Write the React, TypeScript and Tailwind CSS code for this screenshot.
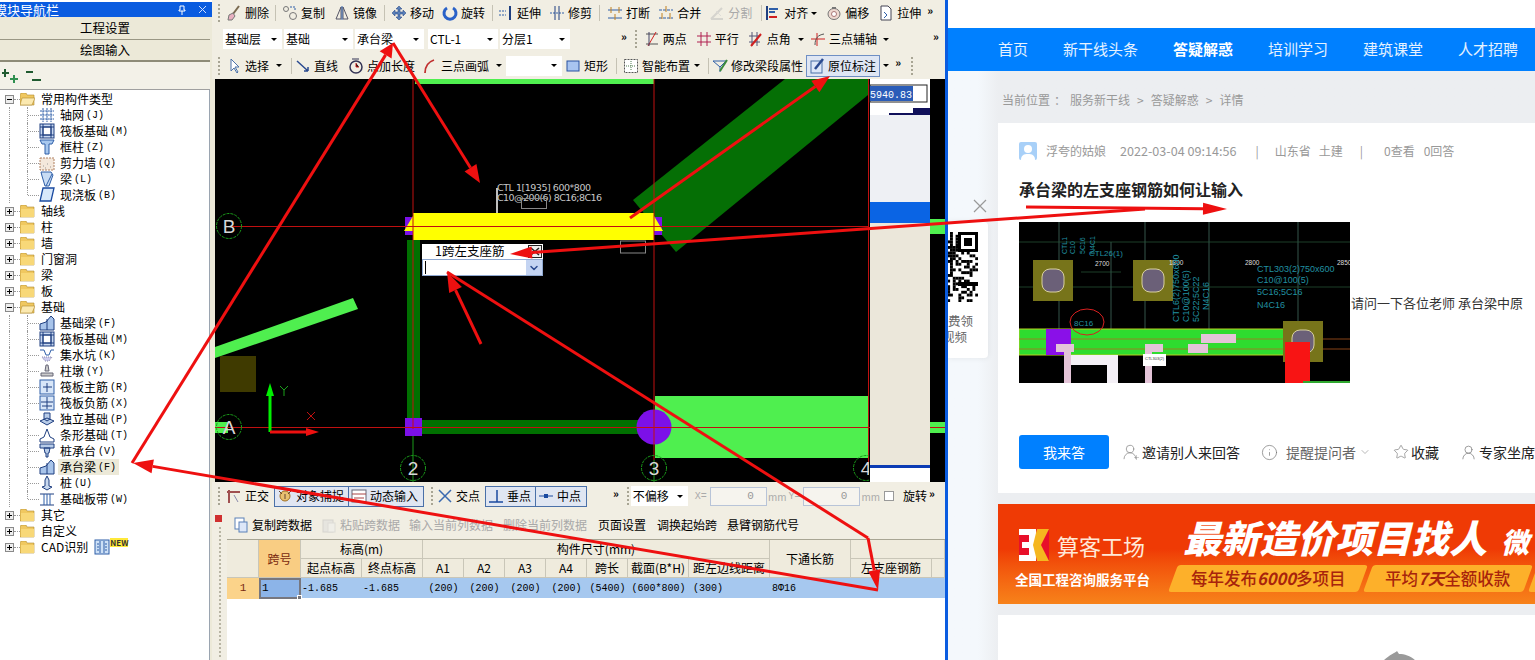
import React from "react";
import { ChevronDown, Info, Star, UserRound, Plus } from "lucide-react";

const MONO = "[font-family:'Liberation_Mono','Noto_Sans_CJK_SC',monospace]";

function Ic({ n, dim }: { n: string; dim?: boolean }) {
  const b = "#2f5fa8", d = "#1f3f80", r = "#d02020";
  const p: Record<string, React.ReactNode> = {
    del: <><path d="M13 1 7 9" stroke="#7a6a50" strokeWidth="2"/><path d="M3 10l4-2 2 3-3 4H2z" fill="#e8b0c0" stroke="#777"/></>,
    copy: <><circle cx="4" cy="4" r="2.5" fill="none" stroke="#777"/><circle cx="11" cy="11" r="3.5" fill="none" stroke="#777"/><path d="M8 2h5v4" stroke={b} fill="none" strokeDasharray="2 1"/></>,
    mirror: <><path d="M7 2 2 14h5zM9 2l5 12H9z" fill="none" stroke="#556"/><path d="M8 1v14" stroke={b}/></>,
    move: <path d="M8 1 5 4h2v3H4V5L1 8l3 3V9h3v3H5l3 3 3-3H9V9h3v2l3-3-3-3v2H9V4h2z" fill="#5a80b8" stroke={d} strokeWidth=".5"/>,
    rot: <path d="M11 3a6 6 0 1 1-6 0" fill="none" stroke="#2a62c8" strokeWidth="3"/>,
    ext: <><path d="M1 6h7M1 10h7" stroke={b} strokeDasharray="2 1"/><path d="M12 1v14" stroke={d} strokeWidth="2"/></>,
    trim: <><path d="M1 8h14" stroke={b} strokeDasharray="2 1"/><path d="M6 1v14M10 1v14" stroke={d}/></>,
    brk: <><path d="M1 5h14M1 13h14" stroke={b}/><path d="M4 2v6M12 2v6M8 9v6" stroke="#c08020"/></>,
    merge: <><path d="M1 5h14M1 13h14" stroke={b} strokeDasharray="3 1"/><path d="M8 1v6M4 8v6M12 8v6" stroke="#c08020"/></>,
    split: <><path d="M2 14 13 3M2 14h12" stroke="#bbb" strokeWidth="2"/><path d="M7 6l5 5" stroke="#ccc"/></>,
    align: <><path d="M2 1v14" stroke={d} strokeWidth="2"/><path d="M4 4h9M4 7h6" stroke={b} strokeWidth="2"/><path d="M4 12h8" stroke={r} strokeWidth="2"/></>,
    off: <><ellipse cx="8" cy="9" rx="6" ry="5.5" fill="#eed8d0" stroke="#777"/><circle cx="8" cy="9" r="2.5" fill="#fff" stroke="#a77"/><path d="M6 3h4" stroke="#777" strokeWidth="2"/></>,
    str: <><path d="M3 1h7l3 3v11H3z" fill="#fff" stroke="#445"/><path d="M6 7l3 3-3 3" fill="none" stroke={b}/></>,
    two: <><path d="M2 3h12M2 13h12" stroke="#555"/><path d="M4 15 12 1" stroke={r}/><path d="M5 1v14" stroke="#446"/></>,
    para: <path d="M1 5h14M1 11h14M5 1v14M11 1v14" stroke="#b02050"/>,
    ang: <><path d="M1 5h11M1 11h11M4 1v14M9 1v14" stroke="#557"/><path d="M3 15 13 3" stroke={r} strokeWidth="2"/></>,
    three: <><path d="M1 8h14M7 2v13" stroke={r}/><path d="M5 14c0-7 3-10 9-11" stroke="#555" fill="none"/></>,
    sel: <path d="M5 1v12l3-3 3 5 1-1-3-5h4z" fill="#fff" stroke="#4a70a8"/>,
    line: <path d="M2 3l11 10M13 13h-4M13 13V9" stroke="#2a4a90" strokeWidth="1.5" fill="none"/>,
    pt: <><circle cx="8" cy="9" r="6" fill="none" stroke="#335" strokeWidth="1.5"/><path d="M8 5v4h3" stroke={r}/><path d="M4 1h7" stroke="#335"/></>,
    arc: <path d="M3 15C3 8 6 4 12 2" fill="none" stroke="#c03030" strokeWidth="1.8"/>,
    rect: <rect x="2" y="3" width="12" height="10" fill="#a8c4f0" stroke="#2850a0"/>,
    smart: <><rect x="1.5" y="1.5" width="13" height="13" fill="#fff" stroke="#555" strokeDasharray="2 1"/><path d="M8 3v10M3 8h10" stroke="#4a7a4a" strokeDasharray="1 1"/></>,
    attr: <><path d="M1 3h13l-6 6z" fill="none" stroke={b}/><path d="M8 9v5" stroke={b}/><path d="M15 2 8 13" stroke="#3a8a3a" strokeWidth="2"/></>,
    mark: <><rect x="2" y="3" width="11" height="12" fill="#dde7f8" stroke="#4a70a8"/><path d="M14 1 6 11" stroke="#2a4a90" strokeWidth="2.5"/></>,
    ortho: <><path d="M3 2v13M1 4h13" stroke="#a05050" strokeWidth="2"/><path d="M8 7l4 7" stroke="#88a"/></>,
    snap: <><circle cx="8" cy="8" r="5" fill="#e8c070" stroke="#a07020"/><path d="M2 3l3 3M14 3l-3 3M8 6v5" stroke="#643"/></>,
    dyn: <><rect x="1" y="2" width="14" height="12" fill="#fff" stroke="#667"/><path d="M1 6h14M3 10h10" stroke="#a44"/></>,
    cross: <path d="M2 2l12 12M14 2 2 14" stroke="#3a6ab0" strokeWidth="1.5"/>,
    perp: <path d="M1 14h14M9 2v12" stroke="#1a4aa0" strokeWidth="1.5"/>,
    mid: <><path d="M1 8h14" stroke="#1a4aa0"/><rect x="6" y="6" width="4" height="4" fill="#1a4aa0"/></>,
    cp: <><rect x="2" y="1" width="9" height="11" fill="#fff" stroke="#5a80b8"/><rect x="6" y="5" width="8" height="10" fill="#dde7f8" stroke="#5a80b8"/></>,
    paste: <><rect x="2" y="3" width="10" height="12" fill="#ddd" stroke="#bbb"/><rect x="7" y="6" width="7" height="9" fill="#eee" stroke="#ccc"/></>,
    grid: <path d="M1 4h14M1 8h14M1 12h14M4 1v14M8 1v14M12 1v14" stroke={b} strokeDasharray="2 .6"/>,
    raft: <><rect x="1" y="1" width="14" height="14" fill="#c8d8f0" stroke={d}/><rect x="4" y="4" width="8" height="8" fill="#fff" stroke={d}/><path d="M1 4h14M1 12h14M4 1v14M12 1v14" stroke={d}/></>,
    col: <path d="M1 1h14l-2 4H10v10H6V5H3z" fill="#a8c8ee" stroke={b}/>,
    wall: <><rect x="1" y="3" width="14" height="12" fill="#f4e8dc" stroke="#b08060" strokeDasharray="2 1"/><path d="M4 11h1M8 9h1M11 12h1M6 13h1" stroke="#999"/></>,
    beam: <><path d="M2 1h10l2 3-4 11H6L3 5z" fill="#c8dcf4" stroke={b}/><path d="M7 15l6-12" stroke={b}/></>,
    slab: <path d="M4 1h11l-3 13H1z" fill="#d8e8fa" stroke="#1a4aa0" strokeWidth="1.3"/>,
    fb: <><path d="M1 15V9l6-2 5-6 3 3v11z" fill="#a8c4ea" stroke={d}/><path d="M8 4v11" stroke={d}/></>,
    pit: <><path d="M1 3h4l2 5h3l2-5h3" fill="none" stroke={b}/><path d="M3 10h10l-3 4H6z" fill="#cce" stroke="#88a" strokeDasharray="1 1"/></>,
    pier: <><path d="M7 2h2l1 6H6zM2 10h12v3H2z" fill="#ccc" stroke="#667"/></>,
    rp: <><rect x="1" y="1" width="14" height="14" fill="#d8e6f8" stroke={b}/><path d="M8 4v9M4 8h9" stroke={d}/></>,
    rn: <><rect x="1" y="1" width="14" height="14" fill="#d8e6f8" stroke={b}/><path d="M8 2v12M2 7h12M3 11h10" stroke={d}/></>,
    iso: <path d="M1 10l7-3 7 3-7 4zM5 8V2h6v6l-3 2z" fill="#b8cce8" stroke={d}/>,
    strip: <path d="M1 15v-3l4-2 3-8 3 8 4 2v3z" fill="#fff" stroke={d}/>,
    pc: <path d="M1 1h14v4H1zM5 5h6l-1 5H9v4H7v-4H6z" fill="#b8cce8" stroke={d}/>,
    pile: <path d="M8 1l2 4v6l3 1-5 3-5-3 3-1V5z" fill="#c8d8ee" stroke={d}/>,
    band: <><path d="M1 3h14M1 14h14" stroke={d}/><path d="M5 3v11M8 3v11M11 3v11" stroke={b}/></>,
    cad: <><rect x="1" y="1" width="14" height="14" fill="#cde0f6" stroke={b}/><path d="M6 2v12M10 2v12M3 5h2M3 8h2M3 11h2M11 5h2M11 8h2M11 11h2" stroke={b}/></>,
  };
  return (
    <svg width="16" height="16" viewBox="0 0 16 16" className={`shrink-0 ${dim ? "opacity-50" : ""}`}>
      {p[n]}
    </svg>
  );
}

function Caret({ className = "" }: { className?: string }) {
  return <span className={`w-0 h-0 shrink-0 border-x-[3px] border-x-transparent border-t-[3px] border-t-black ${className}`} />;
}
function Sep({ className = "" }: { className?: string }) {
  return <span className={`w-px h-[16px] shrink-0 bg-[#c5c2b4] ${className}`} />;
}
function Handle({ className = "" }: { className?: string }) {
  return <span className={`w-[2px] h-[18px] shrink-0 border-l-2 border-dotted border-[#a8a594] ${className}`} />;
}
function More({ className = "" }: { className?: string }) {
  return <span className={`text-[11px] font-bold leading-none -mt-[6px] shrink-0 ${className}`}>»</span>;
}
function Tool({ i, t, className = "", dim }: { i: string; t: string; className?: string; dim?: boolean }) {
  return (
    <span className={`flex items-center gap-[3px] shrink-0 ${dim ? "text-[#a9a9a9]" : ""} ${className}`}>
      <Ic n={i} dim={dim} />
      <span>{t}</span>
    </span>
  );
}
function Sel({ t, className = "" }: { t: string; className?: string }) {
  return (
    <span className={`h-[20px] bg-white flex items-center justify-between pl-[2px] pr-[5px] shrink-0 ${className}`}>
      <span>{t}</span>
      <Caret />
    </span>
  );
}

function TreeTop({ open, t, extra }: { open?: boolean; t: string; extra?: React.ReactNode }) {
  return (
    <div className="flex items-center h-4">
      <span className="w-[5px] h-4 shrink-0" />
      <span className="w-[9px] h-[9px] shrink-0 border border-[#8a8a8a] bg-[#eeeeee] flex items-center justify-center">
        <span className="relative w-[5px] h-px bg-black block">
          {!open && <span className="absolute left-[2px] -top-[2px] w-px h-[5px] bg-black block" />}
        </span>
      </span>
      <span className="w-[6px] shrink-0 border-t border-dotted border-[#999]" />
      <svg width="15" height="13" viewBox="0 0 15 13" className="shrink-0">
        <path d="M0 2 1 0h5l1 2h7v10H0z" fill="#f0c860" stroke="#b08a30" strokeWidth=".6" />
        {open ? <path d="M2 5h13l-3 7H0z" fill="#fbe9b0" stroke="#b08a30" strokeWidth=".6" /> : <rect x="1" y="4" width="13" height="8" fill="#f8d878" />}
      </svg>
      <span className="ml-[6px] whitespace-nowrap">{t}</span>
      {extra}
    </div>
  );
}
function TreeKid({ i, t, c, sel, last }: { i: string; t: string; c: string; sel?: boolean; last?: boolean }) {
  return (
    <div className="flex items-center h-4">
      <span className="w-[10px] h-4 shrink-0 border-r border-dotted border-[#999]" />
      <span className={`w-[18px] shrink-0 border-r border-dotted border-[#999] ${last ? "h-2 self-start" : "h-4"}`} />
      <span className="w-[11px] shrink-0 border-t border-dotted border-[#999]" />
      <Ic n={i} />
      <span className={`ml-[3px] pl-[2px] pr-[3px] h-4 whitespace-nowrap flex items-center ${sel ? "bg-[#ece9d8]" : ""}`}>
        <span>{t}</span>
        <span className={`${MONO} text-[10px] leading-none ml-[2px] mt-[2px]`}>({c})</span>
      </span>
    </div>
  );
}

const CG = "grid grid-cols-[32px_42px_61px_61px_41px_41px_41px_41px_41px_61px_81px_81px_81px_1fr]";
const H = "border-r border-b border-[#c9c6b8] flex items-center justify-center whitespace-nowrap overflow-hidden";

function Arrow({ x1, y1, x2, y2, head = true, w = 3, hl = 18, hw = 7 }: { x1: number; y1: number; x2: number; y2: number; head?: boolean; w?: number; hl?: number; hw?: number }) {
  const dx = x2 - x1, dy = y2 - y1, L = Math.hypot(dx, dy), ux = dx / L, uy = dy / L;
  const bx = x2 - ux * hl, by = y2 - uy * hl;
  return (
    <g>
      <line x1={x1} y1={y1} x2={head ? bx : x2} y2={head ? by : y2} stroke="#ee1010" strokeWidth={w} />
      {head && <polygon points={`${x2},${y2} ${bx - uy * hw},${by + ux * hw} ${bx + uy * hw},${by - ux * hw}`} fill="#ee1010" />}
    </g>
  );
}

function Bubble({ x, y, t, r = 12.5 }: { x: number; y: number; t: string; r?: number }) {
  return (
    <g>
      <circle cx={x} cy={y} r={r} fill="none" stroke="#1a9a1a" strokeDasharray="3 1" />
      <text x={x} y={y + 7} textAnchor="middle" fontSize="19" fill="#d8d8d8" fontFamily="Liberation Sans">{t}</text>
    </g>
  );
}

function Canvas() {
  return (
    <svg width="730" height="403" viewBox="215 79 730 403" className="block">
      <rect x="215" y="79" width="730" height="403" fill="#000" />
      <rect x="215" y="422" width="13" height="11" fill="#4fef4f" />
      <polygon points="215,347 353,298 358,309 215,358" fill="#4fef4f" />
      <rect x="220" y="356" width="36" height="36" fill="#3f3a00" />
      <rect x="415" y="79" width="239" height="5" fill="#4fef4f" />
      <polygon points="633,200 785,79 868,79 868,95 676,252" fill="#056f05" />
      <rect x="655" y="396" width="213" height="62" fill="#4fef4f" />
      <rect x="407" y="240" width="13" height="180" fill="#007000" />
      <rect x="420" y="420" width="225" height="14" fill="#007000" />
      <rect x="405" y="217" width="8" height="18" fill="#7c10e8" />
      <rect x="654" y="217" width="8" height="18" fill="#7c10e8" />
      <polygon points="404,231 413,216 413,231" fill="#ffff00" />
      <polygon points="654,216 663,231 654,231" fill="#ffff00" />
      <rect x="413" y="213" width="241" height="27" fill="#ffff00" />
      <rect x="405" y="418" width="17" height="18" fill="#7c10e8" />
      <circle cx="654" cy="427" r="17.5" fill="#7c10e8" />
      <path d="M413 79v350M654 79v381M868.5 79v392M230 226.5h638M215 427.5h655" stroke="#c01010" strokeWidth="1" fill="none" />
      <path d="M413 436v46M654 460v22" stroke="#1a9a1a" />
      <rect x="870" y="79" width="60" height="36" fill="#fff" />
      <rect x="870" y="85" width="57" height="17" fill="#fff" stroke="#222" />
      <rect x="870" y="86" width="43" height="15" fill="#2a5cb8" />
      <text x="870" y="97.500" fontSize="10" fill="#fff" fontFamily="Liberation Mono">5940.83</text>
      <rect x="889" y="113" width="41" height="2" fill="#10105a" />
      <rect x="913" y="108" width="17" height="7" fill="#10105a" />
      <rect x="870" y="115" width="60" height="87" fill="#eef0f4" />
      <rect x="870" y="202" width="60" height="21" fill="#0a64e4" />
      <rect x="870" y="223" width="60" height="242" fill="#ebe7da" />
      <rect x="870" y="465" width="60" height="3" fill="#0b3cb4" />
      <rect x="870" y="468" width="60" height="14" fill="#fff" />
      <rect x="930" y="219" width="15" height="15" fill="#4fef4f" />
      <rect x="930" y="422" width="15" height="11" fill="#4fef4f" />
      <line x1="930" y1="427.500" x2="945" y2="427.500" stroke="#c01010" />
      <Bubble x={229} y={226} t="B" />
      <Bubble x={229} y={427} t="A" />
      <Bubble x={413} y={468} t="2" />
      <Bubble x={654} y={468} t="3" />
      <clipPath id="c4"><rect x="215" y="79" width="654" height="403" /></clipPath>
      <g clipPath="url(#c4)"><Bubble x={866} y={468} t="4" /></g>
      <line x1="270" y1="432" x2="270" y2="395" stroke="#00f000" strokeWidth="3" />
      <polygon points="270,383 266,396 274,396" fill="#00f000" />
      <line x1="270" y1="432" x2="306" y2="432" stroke="#ee1010" strokeWidth="3" />
      <polygon points="319,432 306,428 306,436" fill="#ee1010" />
      <path d="M280 386l4 4 4-4M284 390v6" stroke="#1aa01a" fill="none" />
      <path d="M307 412l8 8M315 412l-8 8" stroke="#c01010" fill="none" />
      <line x1="497" y1="188" x2="497" y2="213" stroke="#fff" strokeWidth="1.500" />
      <text x="497" y="191" fontSize="9.500" fill="#c8c8c8" fontFamily="DejaVu Sans" textLength="94">CTL 1[1935] 600*800</text>
      <text x="497" y="201" fontSize="9.500" fill="#c8c8c8" fontFamily="DejaVu Sans" textLength="105">C10@200(6) 8C16;8C16</text>
      <rect x="521.500" y="198.500" width="25" height="10" fill="none" stroke="#888" />
      <rect x="620.500" y="241" width="25" height="12" fill="none" stroke="#888" />
    </svg>
  );
}

function Qr() {
  const cells: React.ReactNode[] = [];
  for (let y = 0; y < 25; y++) {
    for (let x = 0; x < 25; x++) {
      const on = ((x * 7 + y * 13 + (x * y) % 5 + (x ^ y)) % 3 === 0) || (x * 3 + y * 5) % 7 === 1;
      if (on) cells.push(<rect key={`${x}-${y}`} x={x * 2.8} y={y * 2.8} width="2.9" height="2.9" fill="#000" />);
    }
  }
  return (
    <svg width="70" height="70" viewBox="0 0 70 70" className="block shrink-0">
      {cells}
      <rect x="50" y="0" width="20" height="20" fill="#fff" />
      <rect x="51.500" y="1.500" width="17" height="17" fill="none" stroke="#000" strokeWidth="3" />
      <rect x="56" y="6" width="8" height="8" fill="#000" />
      <rect x="50" y="50" width="20" height="4" fill="#000" />
    </svg>
  );
}

function Shot() {
  const pad = (x: number, y: number) => (
    <g>
      <rect x={x} y={y} width="40" height="41" fill="#77741a" />
      <rect x={x + 9} y={y + 9} width="22" height="23" rx="8" fill="#6b6078" stroke="#d8d0a0" />
    </g>
  );
  return (
    <svg width="331" height="161" viewBox="0 0 331 161" className="block shrink-0">
      <rect width="331" height="161" fill="#000" />
      <path d="M40 0v107M126 0v107M190 0v107M279 0v107M92 20v107" stroke="#4a7a6a" strokeWidth=".7" />
      <path d="M0 20h331M0 65h331M62 50h40" stroke="#2a5a3a" strokeWidth=".7" />
      {pad(14, 38)}
      {pad(114, 38)}
      <rect x="0" y="107" width="284" height="26" fill="#2fdc2f" stroke="#b8d020" />
      <path d="M0 117h331M0 127h331" stroke="#c06020" strokeWidth=".7" />
      {pad(264, 99)}
      <rect x="27" y="107" width="25" height="26" fill="#8a10e8" />
      <rect x="266" y="120" width="25" height="41" fill="#f81414" />
      <rect x="284" y="159" width="47" height="2" fill="#2fa82f" />
      <path d="M46 133h53v28H88v-18H48z" fill="#f4f0f6" />
      <rect x="37" y="122" width="18" height="8" fill="#e4c4d8" />
      <rect x="45" y="130" width="7" height="31" fill="#e4c4d8" />
      <rect x="126" y="122" width="18" height="8" fill="#e4c4d8" />
      <rect x="126" y="130" width="7" height="31" fill="#e4c4d8" />
      <rect x="182" y="112" width="35" height="9" fill="#e4c4d8" />
      <rect x="169" y="122" width="20" height="9" fill="#e4c4d8" />
      <rect x="124" y="132" width="23" height="12" fill="#fff" />
      <text x="126" y="138" fontSize="4" fill="#333" fontFamily="Liberation Sans">CTL303(2)</text>
      <ellipse cx="68" cy="100" rx="17" ry="13" fill="none" stroke="#d82020" strokeWidth="1" />
      <text x="55" y="104" fontSize="8" fill="#2090a0" fontFamily="Liberation Sans">8C16</text>
      <text x="76" y="44" fontSize="6.500" fill="#ddd" fontFamily="Liberation Sans">2700</text>
      <text x="150" y="43" fontSize="6.500" fill="#ddd" fontFamily="Liberation Sans">1800</text>
      <text x="226" y="43" fontSize="6.500" fill="#ddd" fontFamily="Liberation Sans">2800</text>
      <text x="318" y="43" fontSize="6.500" fill="#ddd" fontFamily="Liberation Sans">2850</text>
      <text x="70" y="34" fontSize="8" fill="#2090a0" fontFamily="Liberation Sans">CTL26(1)</text>
      <g fontSize="9" fill="#2090a0" fontFamily="Liberation Sans">
        <text x="238" y="50">CTL303(2)750x600</text>
        <text x="238" y="61">C10@100(5)</text>
        <text x="238" y="73">5C16;5C16</text>
        <text x="238" y="86">N4C16</text>
      </g>
      <g fontSize="9" fill="#2090a0" fontFamily="Liberation Sans" transform="rotate(-90 160 100)">
        <text x="160" y="100">CTL6(2)750x600</text>
        <text x="160" y="110">C10@100(5)</text>
        <text x="160" y="120">5C22;5C22</text>
        <text x="172" y="130">N4C16</text>
      </g>
      <g fontSize="7" fill="#2090a0" fontFamily="Liberation Sans" transform="rotate(-90 70 28)">
        <text x="66" y="6">CTL1</text>
        <text x="66" y="14">C10</text>
        <text x="66" y="24">5C16</text>
        <text x="66" y="34">N4C1</text>
      </g>
    </svg>
  );
}

export default function App() {
  return (
    <div className={`relative w-[1535px] h-[660px] overflow-hidden flex bg-white text-[12px] text-black [font-family:'Noto_Sans_CJK_SC','Liberation_Sans',sans-serif]`}>
      {/* module navigation */}
      <div className="w-[212px] shrink-0 h-full flex flex-col bg-[#ece9d8] overflow-hidden">
        <div className="h-[2px] bg-white" />
        <div className="h-[15px] bg-[#0a5ce0] flex items-center text-white text-[13px] pr-[5px]">
          <span className="-ml-[6px] whitespace-nowrap">模块导航栏</span>
          <svg width="8" height="10" viewBox="0 0 8 10" className="ml-auto mr-[12px]"><path d="M2 1h4v4h1v1H1V5h1zM4 6v4" stroke="#fff" fill="none" /></svg>
          <svg width="9" height="9" viewBox="0 0 9 9"><path d="M1 1l7 7M8 1 1 8" stroke="#cfe0ff" /></svg>
        </div>
        <div className="h-[23px] mr-[2px] border-b border-[#9a9784] flex items-center justify-center text-[12.500px] bg-[#ece9d8]">工程设置</div>
        <div className="h-[22px] mr-[2px] border-b-2 border-[#8e8b78] flex items-center justify-center text-[12.500px] bg-[#ece9d8]">绘图输入</div>
        <div className="h-[27px] mr-[2px] bg-[#f3f1e8] flex items-center gap-[6px] pl-[2px]">
          <svg width="18" height="16" viewBox="0 0 18 16"><path d="M3 1v8M0 5h7" stroke="#205a30" strokeWidth="2" /><path d="M12 7v8M8 11h8" stroke="#309050" strokeWidth="2" /></svg>
          <svg width="16" height="16" viewBox="0 0 16 16"><path d="M0 4h7" stroke="#205a30" strokeWidth="2" /><path d="M6 12h9" stroke="#205a30" strokeWidth="2" /></svg>
        </div>
        <div className="flex-1 bg-white border-t border-[#a0a0a0] mr-[2px] border-r border-r-[#9aa4b0] leading-4 pt-[1px]">
          <TreeTop open t="常用构件类型" />
          <TreeKid i="grid" t="轴网" c="J" />
          <TreeKid i="raft" t="筏板基础" c="M" />
          <TreeKid i="col" t="框柱" c="Z" />
          <TreeKid i="wall" t="剪力墙" c="Q" />
          <TreeKid i="beam" t="梁" c="L" />
          <TreeKid i="slab" t="现浇板" c="B" last />
          <TreeTop t="轴线" />
          <TreeTop t="柱" />
          <TreeTop t="墙" />
          <TreeTop t="门窗洞" />
          <TreeTop t="梁" />
          <TreeTop t="板" />
          <TreeTop open t="基础" />
          <TreeKid i="fb" t="基础梁" c="F" />
          <TreeKid i="raft" t="筏板基础" c="M" />
          <TreeKid i="pit" t="集水坑" c="K" />
          <TreeKid i="pier" t="柱墩" c="Y" />
          <TreeKid i="rp" t="筏板主筋" c="R" />
          <TreeKid i="rn" t="筏板负筋" c="X" />
          <TreeKid i="iso" t="独立基础" c="P" />
          <TreeKid i="strip" t="条形基础" c="T" />
          <TreeKid i="pc" t="桩承台" c="V" />
          <TreeKid i="fb" t="承台梁" c="F" sel />
          <TreeKid i="pile" t="桩" c="U" />
          <TreeKid i="band" t="基础板带" c="W" last />
          <TreeTop t="其它" />
          <TreeTop t="自定义" />
          <TreeTop
            t="CAD识别"
            extra={
              <span className="flex items-start ml-[6px]">
                <Ic n="cad" />
                <span className="bg-[#ffe93a] text-[#333] text-[8px] leading-[9px] font-bold -mt-[1px]">NEW</span>
              </span>
            }
          />
        </div>
      </div>

      {/* CAD editor */}
      <div className="w-[733px] shrink-0 h-full flex flex-col bg-[#ece9d8]">
        <div className="h-[26px] flex items-center bg-[#f1eee3] whitespace-nowrap">
          <Handle className="ml-[6px]" />
          <Tool i="del" t="删除" className="ml-[6px]" />
          <Sep className="ml-[6px]" />
          <Tool i="copy" t="复制" className="ml-[6px]" />
          <Tool i="mirror" t="镜像" className="ml-[9px]" />
          <Sep className="ml-[7px]" />
          <Tool i="move" t="移动" className="ml-[6px]" />
          <Tool i="rot" t="旋转" className="ml-[8px]" />
          <Sep className="ml-[7px]" />
          <Tool i="ext" t="延伸" className="ml-[5px]" />
          <Tool i="trim" t="修剪" className="ml-[8px]" />
          <Sep className="ml-[7px]" />
          <Tool i="brk" t="打断" className="ml-[7px]" />
          <Tool i="merge" t="合并" className="ml-[8px]" />
          <Tool i="split" t="分割" className="ml-[8px]" dim />
          <Sep className="ml-[9px]" />
          <Tool i="align" t="对齐" className="ml-[3px]" />
          <Caret className="ml-[3px]" />
          <Tool i="off" t="偏移" className="ml-[9px]" />
          <Tool i="str" t="拉伸" className="ml-[9px]" />
          <More className="ml-[6px]" />
        </div>
        <div className="h-[26px] flex items-center bg-[#f1eee3] whitespace-nowrap">
          <Sel t="基础层" className="w-[59px] ml-[11px]" />
          <Sel t="基础" className="w-[69px] ml-[2px]" />
          <Sel t="承台梁" className="w-[69px] ml-[2px]" />
          <Sel t="CTL-1" className="w-[70px] ml-[4px]" />
          <Sel t="分层1" className="w-[70px] ml-[2px]" />
          <More className="ml-[51px]" />
          <Handle className="ml-[8px]" />
          <Tool i="two" t="两点" className="ml-[7px]" />
          <Tool i="para" t="平行" className="ml-[9px]" />
          <Tool i="ang" t="点角" className="ml-[9px]" />
          <Caret className="ml-[7px]" />
          <Tool i="three" t="三点辅轴" className="ml-[6px]" />
          <Caret className="ml-[6px]" />
          <More className="ml-[44px]" />
        </div>
        <div className="h-[27px] flex items-center bg-[#f1eee3] whitespace-nowrap">
          <Handle className="ml-[6px]" />
          <Tool i="sel" t="选择" className="ml-[6px]" />
          <Caret className="ml-[7px]" />
          <Sep className="ml-[9px]" />
          <Tool i="line" t="直线" className="ml-[3px]" />
          <Tool i="pt" t="点加长度" className="ml-[10px]" />
          <Tool i="arc" t="三点画弧" className="ml-[7px]" />
          <Caret className="ml-[7px]" />
          <Sel t="" className="w-[56px] ml-[4px]" />
          <Tool i="rect" t="矩形" className="ml-[3px]" />
          <Sep className="ml-[8px]" />
          <Tool i="smart" t="智能布置" className="ml-[6px]" />
          <Caret className="ml-[4px]" />
          <Sep className="ml-[8px]" />
          <Tool i="attr" t="修改梁段属性" className="ml-[3px]" />
          <span className="ml-[3px] h-[22px] flex items-center bg-[#dfe6f3] border border-[#6f8fc4] pl-[2px] pr-[3px]">
            <Tool i="mark" t="原位标注" />
          </span>
          <Caret className="ml-[3px]" />
          <More className="ml-[6px]" />
          <Handle className="ml-[10px]" />
        </div>
        <div className="relative flex-none h-[403px] ml-[3px]">
          <Canvas />
          <div className="absolute left-[207px] top-[165px] w-[121px] h-[32px] flex flex-col">
            <div className="h-[15px] bg-white flex items-center pl-[13px] pr-px">
              <span className="text-[12.500px] leading-none">1跨左支座筋</span>
              <svg width="14" height="13" viewBox="0 0 14 13" className="ml-auto"><rect x=".5" y=".5" width="13" height="12" fill="#eee" stroke="#222" /><path d="M3 3l8 7M11 3l-8 7" stroke="#222" strokeWidth="1.500" /></svg>
            </div>
            <div className="h-[17px] bg-white border border-[#8fa8d0] flex items-center pl-[2px]">
              <span className="w-px h-[13px] bg-black" />
              <span className="ml-auto w-[16px] h-full bg-[#c4d4f2] flex items-center justify-center">
                <ChevronDown size={12} strokeWidth={3} className="text-[#2b4a90]" />
              </span>
            </div>
          </div>
        </div>
        <div className="h-[28px] flex items-center bg-[#f1eee3] whitespace-nowrap">
          <Handle className="ml-[6px]" />
          <Tool i="ortho" t="正交" className="ml-[6px]" />
          <span className="ml-[5px] h-[21px] w-[75px] flex items-center bg-[#e0e6f2] border border-[#4a70a8] pl-[2px]"><Tool i="snap" t="对象捕捉" /></span>
          <span className="h-[21px] w-[75px] flex items-center bg-[#e0e6f2] border border-l-0 border-[#4a70a8] pl-[2px]"><Tool i="dyn" t="动态输入" /></span>
          <Handle className="ml-[7px]" />
          <Tool i="cross" t="交点" className="ml-[4px]" />
          <span className="ml-[5px] h-[21px] w-[51px] flex items-center bg-[#e0e6f2] border border-[#4a70a8] pl-[2px]"><Tool i="perp" t="垂点" /></span>
          <span className="h-[21px] w-[51px] flex items-center bg-[#e0e6f2] border border-l-0 border-[#4a70a8] pl-[2px]"><Tool i="mid" t="中点" /></span>
          <More className="ml-[26px]" />
          <Handle className="ml-[8px]" />
          <Sel t="不偏移" className="w-[57px] ml-[2px]" />
          <span className={`ml-[7px] text-[10px] text-[#aaa] ${MONO}`}>X=</span>
          <span className={`ml-[3px] w-[57px] h-[19px] border border-[#b8c4d8] bg-[#f6f4ee] flex items-center justify-end pr-[12px] text-[11px] text-[#999] ${MONO}`}>0</span>
          <span className="ml-[1px] text-[10px] text-[#aaa]">mm</span>
          <span className={`ml-[2px] w-[12px] text-[10px] text-[#aaa] ${MONO}`}>Y=</span>
          <span className={`ml-[3px] w-[57px] h-[19px] border border-[#b8c4d8] bg-[#f6f4ee] flex items-center justify-end pr-[12px] text-[11px] text-[#999] ${MONO}`}>0</span>
          <span className="ml-[1px] text-[10px] text-[#aaa]">mm</span>
          <span className="ml-[4px] w-[10px] h-[10px] border border-[#999] bg-white" />
          <span className="ml-[9px]">旋转</span>
          <More className="ml-[2px]" />
        </div>
        <div className="flex-1 flex bg-[#f1eee3] min-h-0">
          <div className="w-[15px] shrink-0 flex flex-col items-center pt-[5px]">
            <span className="w-[7px] h-[7px] bg-[#d03030] self-start ml-[3px]" />
            <span className="mt-[5px] h-[130px] border-l-2 border-dotted border-[#b8b5a4]" />
          </div>
          <div className="flex-1 flex flex-col min-w-0">
            <div className="h-[29px] flex items-center whitespace-nowrap text-[12px]">
              <Tool i="cp" t="复制跨数据" className="ml-[6px]" />
              <Tool i="paste" t="粘贴跨数据" dim className="ml-[9px]" />
              <span className="ml-[9px] text-[#a9a9a9]">输入当前列数据</span>
              <span className="ml-[10px] text-[#a9a9a9]">删除当前列数据</span>
              <span className="ml-[11px]">页面设置</span>
              <span className="ml-[11px]">调换起始跨</span>
              <span className="ml-[10px]">悬臂钢筋代号</span>
            </div>
            <div className="flex-1 bg-white border-t border-[#a8a594] whitespace-nowrap">
              <div className={`${CG} grid-rows-[19px_19px] bg-[#efebdd]`}>
                <div className={`${H} row-span-2`} />
                <div className={`${H} row-span-2 bg-[#f9cd83] text-[#7a2a10]`}>跨号</div>
                <div className={`${H} col-span-2`}>标高(m)</div>
                <div className={`${H} col-span-7`}>构件尺寸(mm)</div>
                <div className={`${H} row-span-2`}>下通长筋</div>
                <div className={`${H} col-span-2`} />
                <div className={H}>起点标高</div>
                <div className={H}>终点标高</div>
                <div className={H}>A1</div>
                <div className={H}>A2</div>
                <div className={H}>A3</div>
                <div className={H}>A4</div>
                <div className={H}>跨长</div>
                <div className={H}>截面(B*H)</div>
                <div className={H}>距左边线距离</div>
                <div className={H}>左支座钢筋</div>
                <div className={H} />
              </div>
              <div className={`${CG} h-[20px] bg-[#a6c8ef] ${MONO} text-[10px] items-stretch`}>
                <div className="bg-[#fbd38a] flex items-center justify-center text-[#7a2a10] text-[11px]">1</div>
                <div className="relative bg-[#8cb4e8] border-2 border-[#77777f] flex items-center pl-[1px] text-[11px]">
                  1
                  <span className="absolute -right-[3px] -bottom-[3px] w-[5px] h-[5px] bg-[#77777f] border border-white" />
                </div>
                <div className="flex items-center pl-[1px]">-1.685</div>
                <div className="flex items-center pl-[1px]">-1.685</div>
                <div className="flex items-center justify-center">(200)</div>
                <div className="flex items-center justify-center">(200)</div>
                <div className="flex items-center justify-center">(200)</div>
                <div className="flex items-center justify-center">(200)</div>
                <div className="flex items-center justify-center">(5400)</div>
                <div className="flex items-center justify-center">(600*800)</div>
                <div className="flex items-center pl-[4px]">(300)</div>
                <div className="flex items-center pl-[2px]">8Φ16</div>
                <div />
                <div />
              </div>
            </div>
          </div>
        </div>
      </div>
      <div className="w-[3px] shrink-0 bg-[#0a5ce0]" />

      {/* question page */}
      <div className="flex-1 min-w-0 h-full overflow-hidden flex flex-col bg-white [font-family:'Noto_Sans_CJK_SC','Liberation_Sans',sans-serif]">
        <div className="h-[28px] shrink-0 bg-white" />
        <div className="h-[43px] shrink-0 bg-[#0080ff] pl-[50px] flex items-center gap-[35px] text-[15px] text-white/90 whitespace-nowrap">
          <span>首页</span>
          <span>新干线头条</span>
          <span className="font-bold text-white">答疑解惑</span>
          <span>培训学习</span>
          <span>建筑课堂</span>
          <span>人才招聘</span>
        </div>
        <div className="flex-1 bg-linear-to-r from-[#f4f8fc] from-[30px] to-[#eceef1] to-[50px] pl-[50px] min-h-0">
          <div className="h-[52px] pl-[4px] pt-[21px] text-[12px] leading-4 text-[#999] whitespace-nowrap w-[520px] flex items-start">
            <span>当前位置</span>
            <span className="ml-[4px]">：</span>
            <span className="ml-[4px]">服务新干线</span>
            <span className="ml-[7px]">&gt;</span>
            <span className="ml-[7px]">答疑解惑</span>
            <span className="ml-[7px]">&gt;</span>
            <span className="ml-[7px]">详情</span>
          </div>
          <div className="w-[620px] h-[370px] bg-white pl-[21px] flex flex-col whitespace-nowrap">
            <div className="mt-[19px] h-[18px] flex items-center text-[12px] text-[#999]">
              <svg width="18" height="18" viewBox="0 0 18 18" className="shrink-0">
                <rect width="18" height="18" rx="2" fill="#a8d0f8" />
                <circle cx="9" cy="7" r="4" fill="#fff" />
                <path d="M2 18c0-5 3-6 7-6s7 1 7 6z" fill="#fff" />
              </svg>
              <span className="ml-[9px]">浮夸的姑娘</span>
              <span className="ml-[14px] text-[12.600px]">2022-03-04 09:14:56</span>
              <span className="ml-[19px]">|</span>
              <span className="ml-[16px]">山东省</span>
              <span className="ml-[8px]">土建</span>
              <span className="ml-[17px]">|</span>
              <span className="ml-[21px]">0查看</span>
              <span className="ml-[9px]">0回答</span>
            </div>
            <div className="mt-[17px] h-[24px] leading-6 text-[16px] font-bold text-[#222]">承台梁的左支座钢筋如何让输入</div>
            <div className="mt-[21px] flex items-center">
              <Shot />
              <span className="text-[13px] text-[#333] ml-px">请问一下各位老师 承台梁中原</span>
            </div>
            <div className="mt-[52px] flex items-center text-[14px] text-[#222]">
              <span className="w-[90px] h-[34px] rounded-[3px] bg-[#0080ff] text-white flex items-center justify-center">我来答</span>
              <span className="relative ml-[12px] text-[#888] flex">
                <UserRound size={18} strokeWidth={1} />
                <Plus size={7} strokeWidth={1.5} className="absolute -right-[1px] bottom-0" />
              </span>
              <span className="ml-[3px]">邀请别人来回答</span>
              <Info size={17} strokeWidth={1} className="ml-[21px] text-[#777]" />
              <span className="ml-[8px] text-[#666]">提醒提问者</span>
              <ChevronDown size={12} strokeWidth={1.2} className="ml-[3px] text-[#888]" />
              <Star size={16} strokeWidth={1} className="ml-[22px] text-[#777]" />
              <span className="ml-[2px]">收藏</span>
              <UserRound size={17} strokeWidth={1} className="ml-[21px] text-[#777]" />
              <span className="ml-[2px]">专家坐席</span>
            </div>
          </div>
          <div className="mt-[11px] w-[620px] h-[100px] bg-linear-to-b from-[#ef3a05] from-45% to-[#f7821a] flex items-start overflow-hidden whitespace-nowrap">
            <div className="w-[170px] shrink-0 pl-[18px] pt-[25px] text-white">
              <div className="flex items-center h-[32px] pl-[3px]">
                <svg width="30" height="32" viewBox="0 0 30 32" className="shrink-0">
                  <rect width="30" height="32" fill="#e8102a" />
                  <path d="M0 0h17v32H0v-6h10v-7H3v-6h7V6H0z" fill="#fff" />
                  <path d="M18 0h12l-8 16 8 16H18l-4-16z" fill="#f5b71f" />
                </svg>
                <span className="ml-[8px] text-[22px] leading-none text-[#ffe9d8]">算客工场</span>
              </div>
              <div className="mt-[8px] text-[13.500px] font-bold leading-5 -ml-[1px]">全国工程咨询服务平台</div>
            </div>
            <div className="pl-[15px] flex-1 min-w-0">
              <div className="pt-[9px] h-[60px] text-white font-black italic text-[38px] leading-[48px] flex items-baseline">
                <span>最新造价项目找人</span>
                <span className="ml-[14px] text-[28px]">微</span>
              </div>
              <div className="flex gap-[5px] -ml-[10px] h-[27px] mt-[1px]">
                <span className="w-[190px] bg-[#fdb02a] -skew-x-[20deg] rounded-[3px] flex items-center justify-center shrink-0">
                  <span className="skew-x-[20deg] text-[#a8240c] font-medium text-[16.500px] leading-none">每年发布<b className="italic">6000</b>多项目</span>
                </span>
                <span className="w-[160px] bg-[#fdb02a] -skew-x-[20deg] rounded-[3px] flex items-center justify-center shrink-0">
                  <span className="skew-x-[20deg] text-[#a8240c] font-medium text-[16.500px] leading-none">平均<b className="italic">7天</b>全额收款</span>
                </span>
                <span className="w-[100px] bg-[#fdb02a] -skew-x-[20deg] rounded-[3px] shrink-0" />
              </div>
            </div>
          </div>
          <div className="mt-[11px] w-[620px] h-[60px] bg-white pl-[385px] pt-[36px]">
            <svg width="34" height="10" viewBox="0 0 34 10"><path d="M0 10C6 4 12 2 14 0l2 3c6 0 12 2 17 7z" fill="#9a9a9a" /></svg>
          </div>
        </div>
      </div>

      {/* floating QR widget */}
      <div className="absolute left-[948px] top-[190px] w-[40px] h-[168px] flex flex-col">
        <div className="h-[32px] flex items-center justify-end pr-[1px]">
          <svg width="14" height="14" viewBox="0 0 14 14"><path d="M1 1l12 12M13 1 1 13" stroke="#999" strokeWidth="1.200" /></svg>
        </div>
        <div className="flex-1 bg-white rounded-r-[4px] shadow-[0_0_6px_rgba(0,0,0,0.08)] overflow-hidden flex flex-col items-end">
          <div className="mt-[10px] mr-[10px] w-[30px] h-[70px] overflow-hidden flex justify-end shrink-0"><Qr /></div>
          <div className="mt-[11px] text-[12.500px] leading-[16px] text-[#666] whitespace-nowrap flex flex-col items-end">
            <span className="mr-[15px]">费领</span>
            <span className="mr-[21px]">视频</span>
          </div>
        </div>
      </div>

      {/* hand-drawn red arrows */}
      <svg width="1535" height="660" viewBox="0 0 1535 660" className="absolute left-0 top-0 pointer-events-none">
        <Arrow x1={132} y1={463} x2={393} y2={43} w={3} hl={14} hw={7} />
        <Arrow x1={393} y1={43} x2={480} y2={183} />
        <Arrow x1={630} y1={218} x2={830} y2={76} />
        <Arrow x1={1145} y1={209} x2={510} y2={254} hl={22} hw={6} />
        <Arrow x1={1026} y1={207} x2={1227} y2={209} hl={24} hw={6} />
        <Arrow x1={481} y1={344} x2={447} y2={272} hl={20} />
        <Arrow x1={447} y1={272} x2={868} y2={538} head={false} />
        <Arrow x1={868} y1={538} x2={878} y2={590} hl={20} hw={6} />
        <Arrow x1={878} y1={590} x2={133} y2={463} hl={20} hw={7} />
      </svg>
    </div>
  );
}
